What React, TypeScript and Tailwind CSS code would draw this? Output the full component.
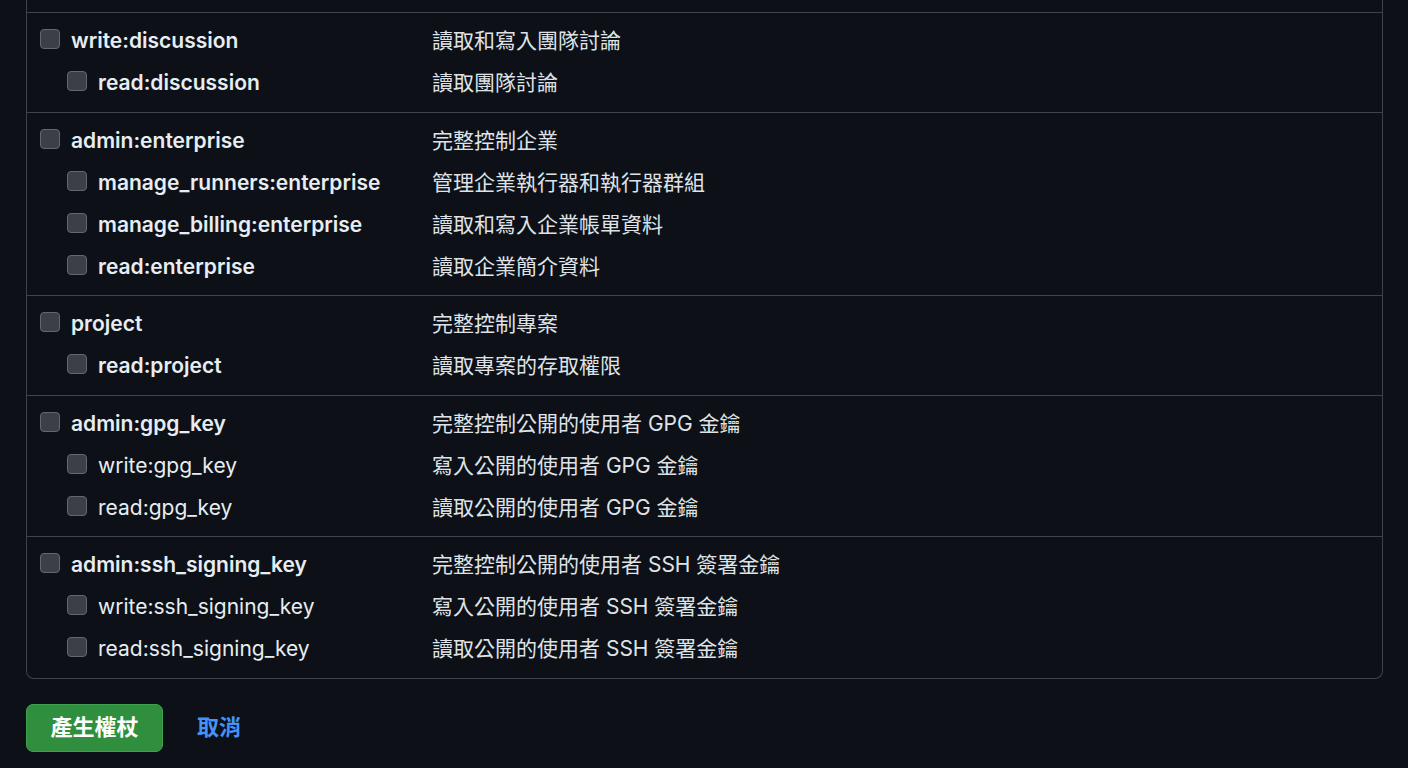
import React from 'react';

type Scope = { name: string; desc: string; bold?: boolean };
type Group = { parent: Scope; children: Scope[] };

const groups: Group[] = [
  {
    parent: { name: 'write:discussion', desc: '讀取和寫入團隊討論' },
    children: [{ name: 'read:discussion', desc: '讀取團隊討論', bold: true }],
  },
  {
    parent: { name: 'admin:enterprise', desc: '完整控制企業' },
    children: [
      { name: 'manage_runners:enterprise', desc: '管理企業執行器和執行器群組', bold: true },
      { name: 'manage_billing:enterprise', desc: '讀取和寫入企業帳單資料', bold: true },
      { name: 'read:enterprise', desc: '讀取企業簡介資料', bold: true },
    ],
  },
  {
    parent: { name: 'project', desc: '完整控制專案' },
    children: [{ name: 'read:project', desc: '讀取專案的存取權限', bold: true }],
  },
  {
    parent: { name: 'admin:gpg_key', desc: '完整控制公開的使用者 GPG 金鑰' },
    children: [
      { name: 'write:gpg_key', desc: '寫入公開的使用者 GPG 金鑰' },
      { name: 'read:gpg_key', desc: '讀取公開的使用者 GPG 金鑰' },
    ],
  },
  {
    parent: { name: 'admin:ssh_signing_key', desc: '完整控制公開的使用者 SSH 簽署金鑰' },
    children: [
      { name: 'write:ssh_signing_key', desc: '寫入公開的使用者 SSH 簽署金鑰' },
      { name: 'read:ssh_signing_key', desc: '讀取公開的使用者 SSH 簽署金鑰' },
    ],
  },
];

const Box = () => (
  <span className="block w-[20px] h-[20px] rounded-[4px] bg-[#3c4046] border border-[#626870] shrink-0 -translate-y-[2px]" />
);

const Row = ({ scope, child, bold }: { scope: Scope; child?: boolean; bold: boolean }) => (
  <div className="grid grid-cols-[392px_1fr] items-center h-[42px]">
    <label className={`flex items-center gap-[11px] ${child ? 'pl-[27px]' : ''}`}>
      <Box />
      <span className={bold ? 'font-semibold' : 'font-normal'}>{scope.name}</span>
    </label>
    <span className="text-[#dfe3e8]">{scope.desc}</span>
  </div>
);

const App: React.FC = () => {
  return (
    <div
      className="min-h-screen bg-[#0d1117] text-[#e6edf3] px-[26px] pb-10 text-[21px]"
      style={{ fontFamily: 'Inter, "Noto Sans CJK TC", sans-serif' }}
    >
      <div className="w-[1357px] border-x border-b border-[#3d444d] rounded-b-[8px]">
        <div className="h-[12px]" />
        {groups.map((g) => (
          <div key={g.parent.name} className="border-t border-[#3d444d] pt-[7px] pb-[7.5px] px-[13px]">
            <Row scope={g.parent} bold />
            {g.children.map((c) => (
              <Row key={c.name} scope={c} child bold={!!c.bold} />
            ))}
          </div>
        ))}
      </div>
      <div className="flex items-center gap-[34px] mt-[25px]">
        <button className="w-[137px] h-[48px] rounded-[7px] bg-[#2f8f3e] border border-[#3fa04e] text-white font-bold text-[22px]">
          產生權杖
        </button>
        <a className="text-[#4493f8] font-semibold text-[22px]">取消</a>
      </div>
    </div>
  );
};

export default App;
